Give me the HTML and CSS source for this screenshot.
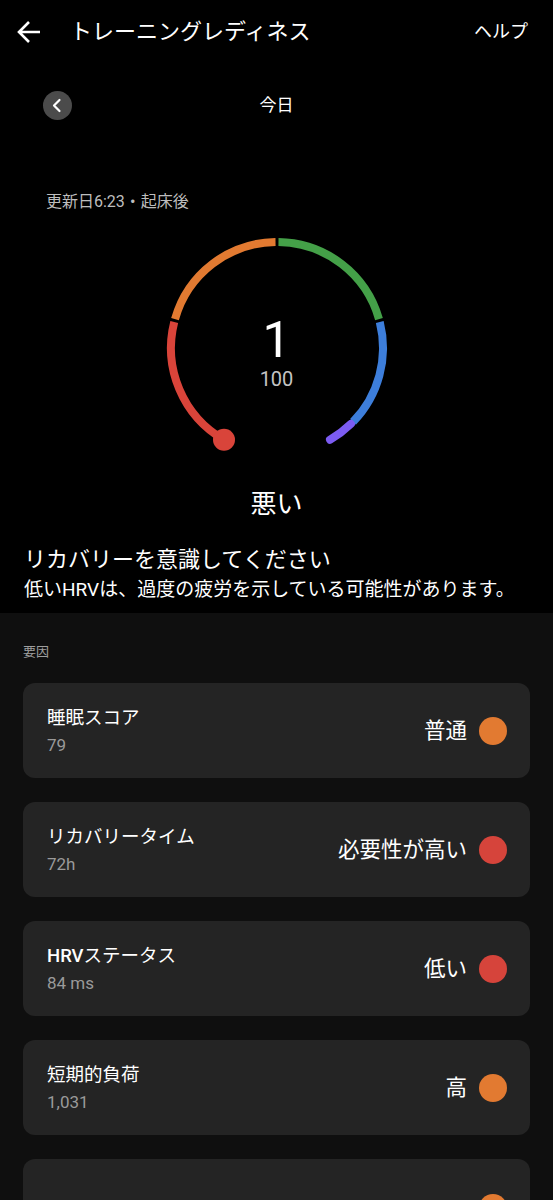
FILE: index.html
```html
<!DOCTYPE html>
<html lang="ja">
<head>
    <meta charset="UTF-8">
    <meta name="viewport" content="width=device-width, initial-scale=1.0">
    <title>トレーニングレディネス</title>
    <link rel="stylesheet" href="styles.css">
</head>
<body>

    <div class="hero">
        <div class="appbar">
            <svg class="back" width="26" height="26" viewBox="0 0 26 26">
                <path d="M24 13H3 M13 3L3 13l10 10" fill="none" stroke="#fff" stroke-width="2.6" stroke-linejoin="miter"/>
            </svg>
            <h1 class="title">トレーニングレディネス</h1>
            <span class="help">ヘルプ</span>
        </div>

        <div class="day-nav">
            <span class="prev">
                <svg width="29" height="29" viewBox="0 0 29 29">
                    <path d="M16.5 9l-5.5 5.5 5.5 5.5" fill="none" stroke="#fff" stroke-width="2.2" stroke-linecap="round" stroke-linejoin="round"/>
                </svg>
            </span>
            <span class="day">今日</span>
        </div>

        <p class="updated">更新日6:23・起床後</p>

        <div class="gauge">
            <svg width="240" height="240" viewBox="0 0 240 240">
                <g fill="none" stroke-width="8">
                    <path d="M67 211.8 A106 106 0 0 1 17.24 94" stroke="#d9443a"/>
                    <path d="M18.01 91.14 A106 106 0 0 1 118.52 14.01" stroke="#e27a31"/>
                    <path d="M121.48 14.01 A106 106 0 0 1 221.99 91.14" stroke="#44a048"/>
                    <path d="M222.76 94 A106 106 0 0 1 195.99 193.9" stroke="#3d7edb"/>
                    <path d="M193.9 195.99 A106 106 0 0 1 173 211.8" stroke="#7c5cf2" stroke-linecap="round"/>
                </g>
                <circle cx="67" cy="211.8" r="11" fill="#d9443a"/>
            </svg>
            <div class="reading">
                <div class="score">1</div>
                <div class="max">100</div>
            </div>
        </div>

        <div class="level">悪い</div>
        <h2 class="headline">リカバリーを意識してください</h2>
        <p class="advice">低いHRVは、過度の疲労を示している可能性があります。</p>
    </div>

    <div class="factors">
        <h3 class="section-label">要因</h3>

        <div class="factor">
            <div class="info">
                <div class="name">睡眠スコア</div>
                <div class="value">79</div>
            </div>
            <div class="status">普通</div>
            <span class="dot orange"></span>
        </div>

        <div class="factor">
            <div class="info">
                <div class="name">リカバリータイム</div>
                <div class="value">72h</div>
            </div>
            <div class="status">必要性が高い</div>
            <span class="dot red"></span>
        </div>

        <div class="factor">
            <div class="info">
                <div class="name"><b>HRV</b>ステータス</div>
                <div class="value">84 ms</div>
            </div>
            <div class="status">低い</div>
            <span class="dot red"></span>
        </div>

        <div class="factor">
            <div class="info">
                <div class="name">短期的負荷</div>
                <div class="value">1,031</div>
            </div>
            <div class="status">高</div>
            <span class="dot orange"></span>
        </div>

        <div class="factor peek">
            <div class="info"></div>
            <span class="dot orange"></span>
        </div>
    </div>

</body>
</html>
```

FILE: styles.css
```css
body {
    margin: 0;
    background-color: #0f0f0f;
    color: #fff;
    font-family: Roboto, "Noto Sans CJK JP", sans-serif;
}

h1, h2, h3, p {
    margin: 0;
    font-weight: 400;
}

.hero {
    background-color: #000;
    padding-bottom: 10px;
}

.appbar {
    height: 64px;
    display: flex;
    align-items: center;
    padding: 0 25px 0 16px;
}

.back {
    display: block;
}

.title {
    flex: 1;
    margin-left: 28px;
    font-size: 22px;
    line-height: 30px;
}

.help {
    font-size: 18px;
    line-height: 26px;
}

.day-nav {
    margin-top: 26px;
    height: 30px;
    display: grid;
    grid-template-columns: 1fr auto 1fr;
    align-items: center;
}

.prev {
    justify-self: start;
    margin-left: 43px;
    width: 29px;
    height: 29px;
    border-radius: 50%;
    background-color: #4b4b4b;
}

.prev svg {
    display: block;
}

.day {
    font-size: 17px;
    line-height: 24px;
}

.updated {
    margin-top: 72px;
    padding-left: 46px;
    font-size: 16px;
    line-height: 20px;
    color: #bdbdbd;
}

.gauge {
    margin: 16px auto 0;
    width: 240px;
    height: 240px;
    display: grid;
}

.gauge svg,
.reading {
    grid-area: 1 / 1;
}

.reading {
    padding-top: 85px;
    text-align: center;
}

.score {
    font-size: 50px;
    line-height: 54px;
}

.max {
    font-size: 20px;
    line-height: 24px;
    color: #c4c4c4;
}

.level {
    margin-top: 19px;
    text-align: center;
    font-size: 26px;
    line-height: 34px;
}

.headline {
    margin-top: 24px;
    padding-left: 24px;
    font-size: 22px;
    line-height: 30px;
}

.advice {
    margin-top: 2px;
    padding-left: 24px;
    font-size: 19px;
    line-height: 26px;
}

.factors {
    padding: 30px 23px 0;
    display: flex;
    flex-direction: column;
    gap: 24px;
}

.section-label {
    margin: 0 0 -2px;
    font-size: 13px;
    line-height: 18px;
    font-weight: 400;
    color: #9e9e9e;
}

.factor {
    height: 95px;
    box-sizing: border-box;
    display: flex;
    align-items: center;
    padding: 0 23px 0 24px;
    background-color: #242424;
    border-radius: 12px;
}

.info {
    flex: 1;
}

.name {
    font-size: 18.5px;
    line-height: 24px;
}

.name b {
    font-weight: 500;
}

.value {
    margin-top: 4px;
    font-size: 17px;
    line-height: 22px;
    color: #9a9a9a;
}

.status {
    font-size: 21.5px;
    line-height: 30px;
    margin-right: 12px;
}

.dot {
    width: 28px;
    height: 28px;
    border-radius: 50%;
}

.dot.orange {
    background-color: #e27a31;
}

.dot.red {
    background-color: #d6443b;
}

.factor.peek {
    align-items: flex-start;
    padding-top: 35px;
    height: 95px;
}
```
